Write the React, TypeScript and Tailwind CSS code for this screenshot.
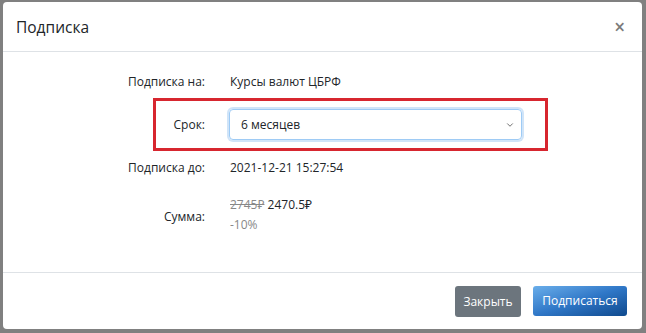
import { ChevronDown } from 'lucide-react';

export default function App() {
  return (
    <div className="w-[646px] h-[333px] bg-[#808080] pt-[2px] pl-[3px] overflow-hidden" style={{ fontFamily: '"Open Sans", "Noto Sans", sans-serif' }}>
      <div className="w-[639px] h-[327px] bg-white rounded-[4px] flex flex-col text-[#212529]">
        {/* Header */}
        <div className="h-[50px] border-b border-[#dee2e6] flex items-center justify-between pl-[13px] pr-[17px]">
          <h5 className="text-[15.5px] leading-none pt-[3px]">Подписка</h5>
          <span className="text-[19px] font-semibold text-[#7a7a7a] leading-none pt-[1px]">×</span>
        </div>

        {/* Body */}
        <div className="flex-1 flex flex-col pl-[100px] pt-[18px] text-[12px]">
          <div className="flex items-center h-[24px]">
            <div className="w-[102px] text-right">Подписка на:</div>
            <div className="ml-[25px]">Курсы валют ЦБРФ</div>
          </div>

          <div className="mt-[4px] ml-[50px] w-[395px] h-[53px] border-[3px] border-[#d7262f] flex items-center">
            <div className="w-[49px] text-right">Срок:</div>
            <div className="ml-[24px] w-[293px] h-[31px] rounded-[4px] border border-[#9ecbf5] shadow-[0_0_0_2px_rgba(150,195,240,0.45)] flex items-center justify-between pl-[11px] pr-[6px]">
              <span>6 месяцев</span>
              <ChevronDown size={10} strokeWidth={2} className="text-[#555]" />
            </div>
          </div>

          <div className="mt-[5px] flex items-center h-[24px]">
            <div className="w-[102px] text-right">Подписка до:</div>
            <div className="ml-[25px]">2021-12-21 15:27:54</div>
          </div>

          <div className="mt-[16px] flex items-center">
            <div className="w-[102px] text-right pt-[4px]">Сумма:</div>
            <div className="ml-[25px] flex flex-col">
              <div>
                <span className="line-through text-[#888]">2745₽</span> 2470.5₽
              </div>
              <div className="text-[12px] text-[#888] mt-[2px]">-10%</div>
            </div>
          </div>
        </div>

        {/* Footer */}
        <div className="h-[57px] border-t border-[#dee2e6] flex items-start justify-end gap-[12px] pt-[13px] pr-[15px] text-[12px]">
          <button className="h-[31px] w-[66px] rounded-[3px] bg-[#6c757d] text-white">Закрыть</button>
          <button className="h-[30px] w-[94px] rounded-[3px] text-white bg-gradient-to-br from-[#6aaeea] via-[#2f77c7] to-[#0f4a8e]">Подписаться</button>
        </div>
      </div>
    </div>
  );
}
